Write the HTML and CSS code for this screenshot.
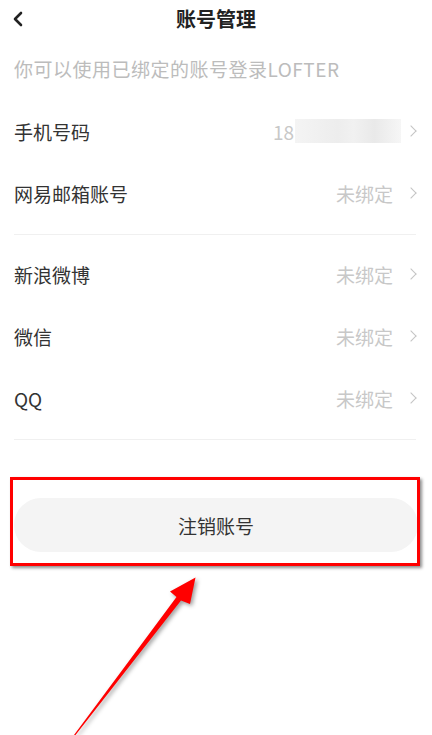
FILE: index.html
```html
<!DOCTYPE html>
<html lang="zh-CN">
<head>
    <meta charset="UTF-8">
    <meta name="viewport" content="width=device-width, initial-scale=1.0">
    <title>账号管理</title>
    <link rel="stylesheet" href="styles.css">
</head>
<body>

<div class="page">
    <div class="header">
        <span class="back">
            <svg width="12" height="16" viewBox="0 0 12 16"><path d="M9 2 L3 8 L9 14" fill="none" stroke="#222" stroke-width="2.6" stroke-linecap="round" stroke-linejoin="round"/></svg>
        </span>
        <h1>账号管理</h1>
    </div>

    <p class="tip">你可以使用已绑定的账号登录LOFTER</p>

    <div class="group">
        <div class="row">
            <span class="label">手机号码</span>
            <span class="value">18<span class="blur"></span></span>
            <span class="arrow"></span>
        </div>
        <div class="row">
            <span class="label">网易邮箱账号</span>
            <span class="value">未绑定</span>
            <span class="arrow"></span>
        </div>
    </div>

    <div class="group">
        <div class="row">
            <span class="label">新浪微博</span>
            <span class="value">未绑定</span>
            <span class="arrow"></span>
        </div>
        <div class="row">
            <span class="label">微信</span>
            <span class="value">未绑定</span>
            <span class="arrow"></span>
        </div>
        <div class="row">
            <span class="label">QQ</span>
            <span class="value">未绑定</span>
            <span class="arrow"></span>
        </div>
    </div>

    <button class="logout">注销账号</button>

    <!-- 标注 -->
    <div class="mark-box"></div>
    <svg class="mark-arrow" width="432" height="735" viewBox="0 0 432 735">
        <polygon points="74,735 176.5,597 170,591.5 195.5,577.5 190,604 181,600.5 75.5,735" fill="#ff0000"/>
    </svg>
</div>

</body>
</html>
```

FILE: styles.css
```css
body {
    margin: 0;
    padding: 0;
    background-color: #fff;
    font-family: "Noto Sans CJK SC", "Noto Sans", sans-serif;
    color: #333;
}
.page {
    position: relative;
    width: 432px;
    height: 735px;
    overflow: hidden;
}
.header {
    position: relative;
    height: 38px;
    display: flex;
    align-items: center;
    justify-content: center;
}
.back {
    position: absolute;
    left: 12px;
    top: 11px;
    display: flex;
}
h1 {
    margin: 0;
    font-size: 20px;
    font-weight: bold;
    color: #222;
    line-height: 38px;
}
.tip {
    margin: 0;
    padding: 17px 14px 9px;
    font-size: 19px;
    letter-spacing: 0.5px;
    line-height: 28px;
    color: #bcbcbc;
}
.group {
    margin: 0 16px 0 14px;
    padding: 9px 0;
    border-bottom: 1px solid #f0f0f0;
}
.row {
    height: 60px;
    padding-bottom: 2px;
    display: flex;
    align-items: center;
}
.label {
    flex: 1;
    font-size: 19px;
    color: #333;
}
.value {
    display: flex;
    align-items: center;
    font-size: 19px;
    color: #c8c8c8;
}
.blur {
    width: 106px;
    height: 24px;
    margin-left: 1px;
    margin-right: -8px;
    background: linear-gradient(to right, #f4f4f4, #ededed 40%, #f1f1f1 55%, #e9e9e9 75%, #f6f6f6);
}
.arrow {
    width: 7px;
    height: 7px;
    margin-left: 14px;
    margin-right: 1px;
    border-top: 1.5px solid #c4c4c4;
    border-right: 1.5px solid #c4c4c4;
    transform: rotate(45deg);
}
.logout {
    display: block;
    width: 404px;
    height: 54px;
    margin: 58px 0 0 14px;
    border: none;
    border-radius: 27px;
    background-color: #f4f4f4;
    font-family: inherit;
    font-size: 19px;
    color: #333;
}
.mark-box {
    position: absolute;
    left: 10px;
    top: 477px;
    width: 404px;
    height: 83px;
    border: 3px solid #ff0000;
    box-shadow: 2px 2px 3px rgba(0, 0, 0, 0.45);
}
.mark-arrow {
    position: absolute;
    left: 0;
    top: 0;
    filter: drop-shadow(2px 2px 2px rgba(0, 0, 0, 0.4));
}
```
